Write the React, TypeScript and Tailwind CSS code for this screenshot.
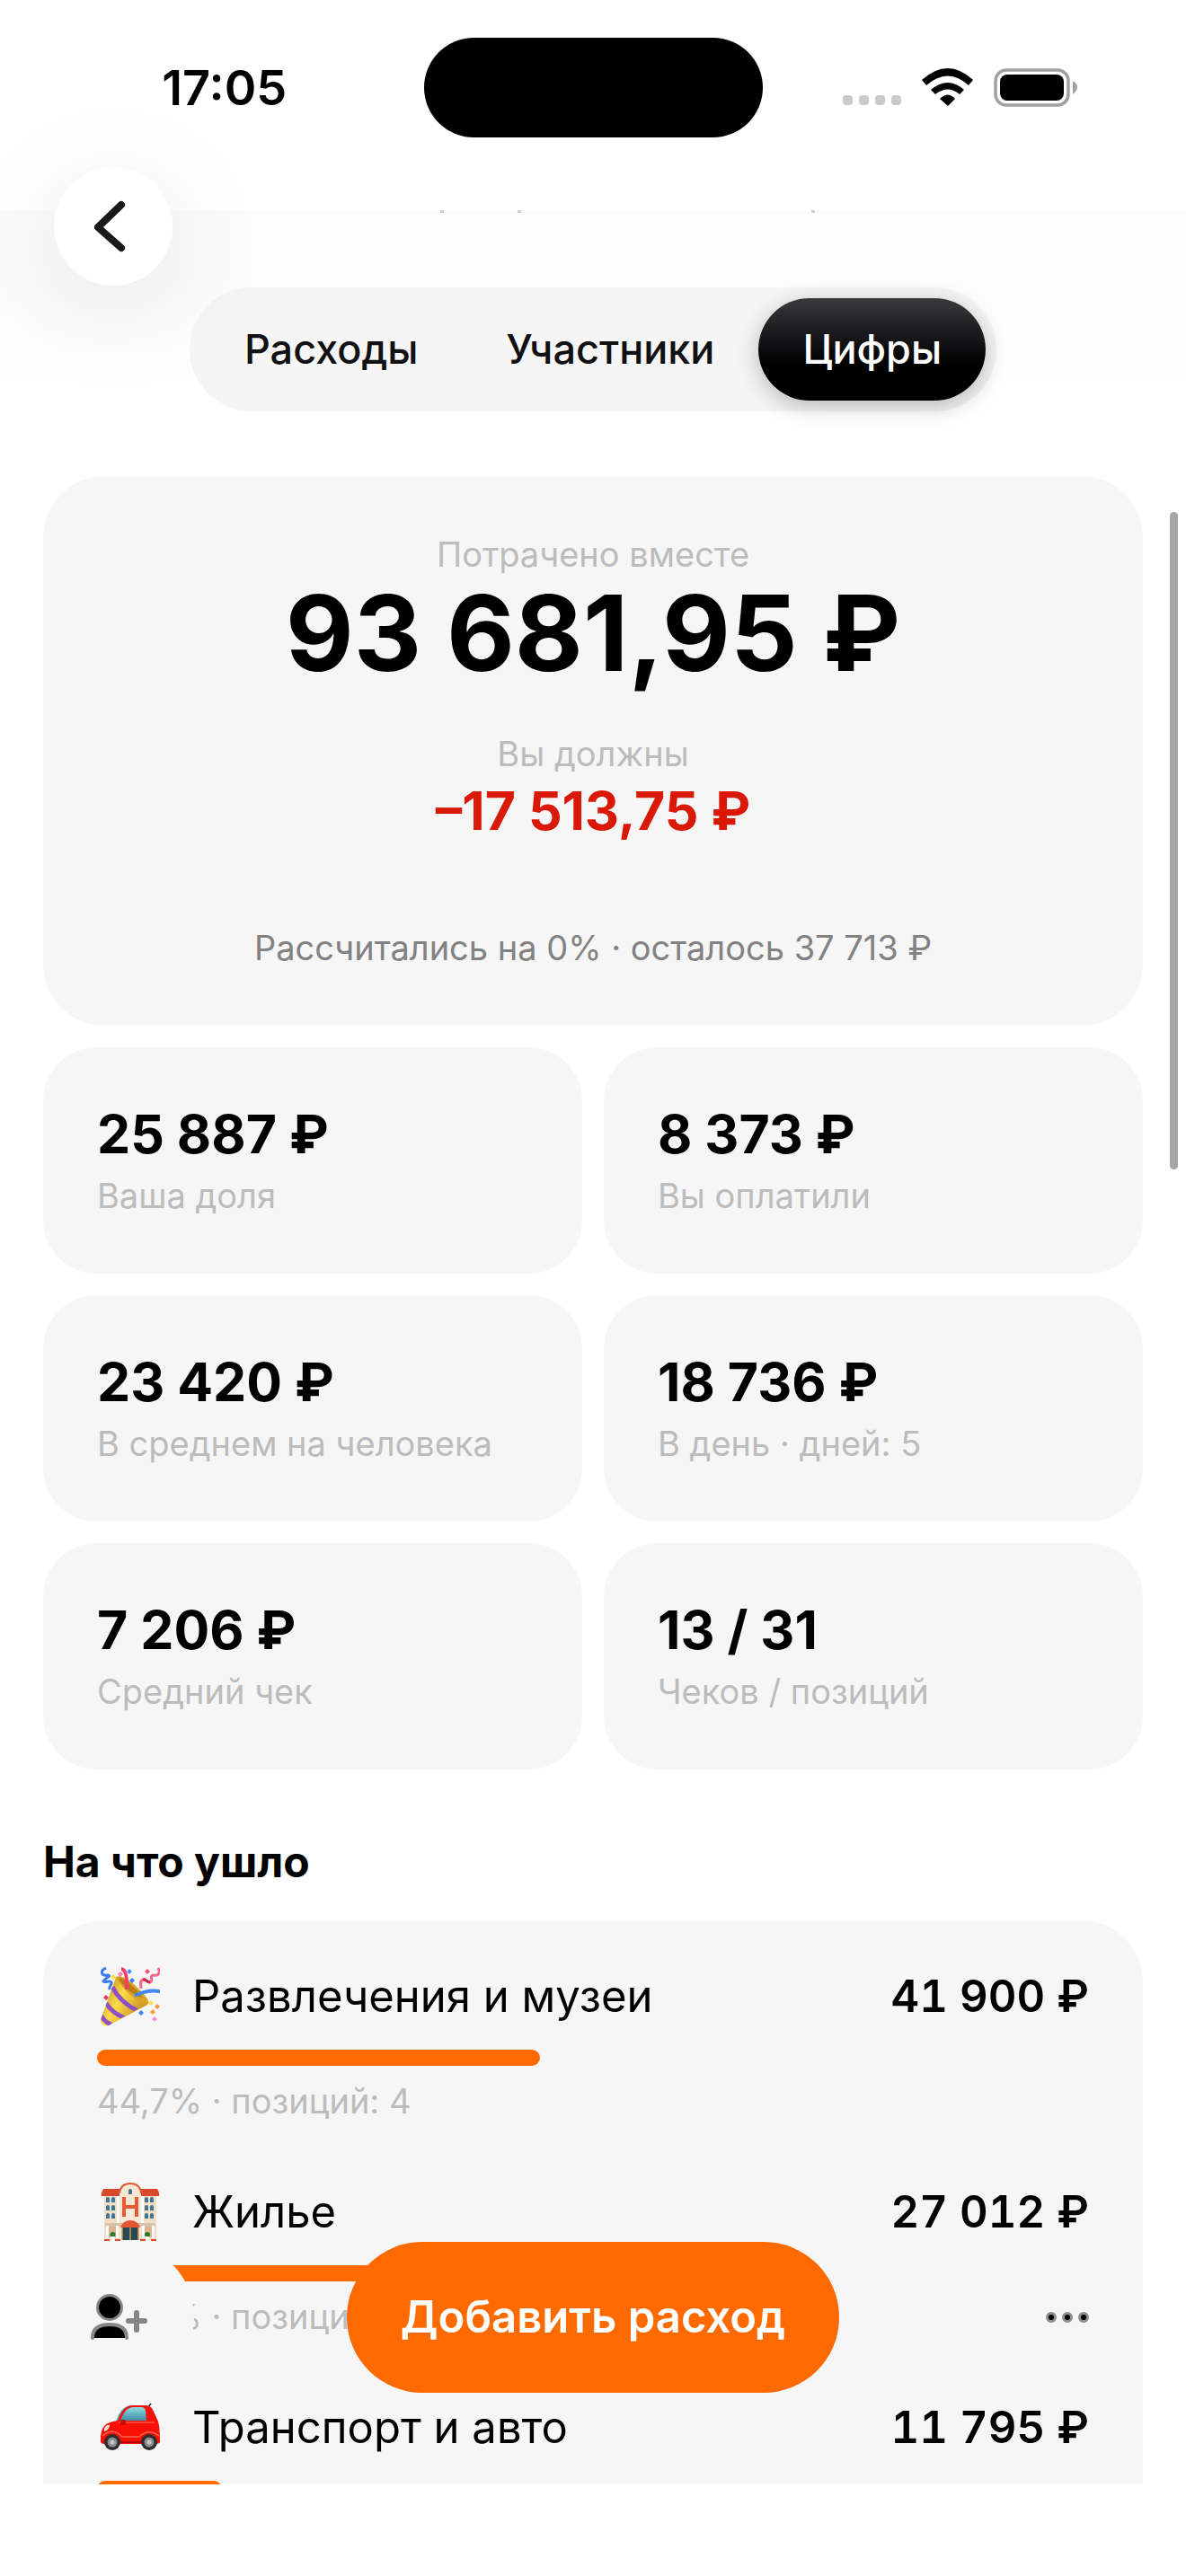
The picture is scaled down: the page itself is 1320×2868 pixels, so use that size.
import React, { useState } from "react";
import clsx from "clsx";

interface Stat {
  value: string;
  label: string;
}

interface Category {
  title: string;
  amount: string;
  percent: number;
  caption?: string;
  Icon: () => React.ReactElement;
}

const TABS = ["Расходы", "Участники", "Цифры"];

const STATS: Stat[] = [
  { value: "25 887 ₽", label: "Ваша доля" },
  { value: "8 373 ₽", label: "Вы оплатили" },
  { value: "23 420 ₽", label: "В среднем на человека" },
  { value: "18 736 ₽", label: "В день · дней: 5" },
  { value: "7 206 ₽", label: "Средний чек" },
  { value: "13 / 31", label: "Чеков / позиций" },
];

const CATEGORIES: Category[] = [
  { title: "Развлечения и музеи", amount: "41 900 ₽", percent: 44.7, caption: "44,7% · позиций: 4", Icon: PartyIcon },
  { title: "Жилье", amount: "27 012 ₽", percent: 28.8, caption: "28,8% · позиций: 2", Icon: HotelIcon },
  { title: "Транспорт и авто", amount: "11 795 ₽", percent: 12.6, Icon: CarIcon },
];

function PartyIcon() {
  return (
    <svg viewBox="0 0 66 66" className="size-[66px]" aria-hidden="true">
      <defs>
        <linearGradient id="cone" x1="0" y1="0.3" x2="0.8" y2="0.8">
          <stop offset="0" stopColor="#c9961c" />
          <stop offset="0.45" stopColor="#fbdc4b" />
          <stop offset="1" stopColor="#cf9420" />
        </linearGradient>
        <clipPath id="cone-clip">
          <path d="M17 11C21 18 38 38 53 40L9 65Q1 67 0 59Z" />
        </clipPath>
      </defs>
      <path d="M17 11C22 8 32 14 41 23C50 32 56 38 52 42C43 45 17 20 17 11Z" fill="#d9a325" />
      <path d="M20 12C28 13 38 23 47 34C38 32 25 24 20 12Z" fill="#b97c12" />
      <path d="M17 11C21 21 38 38 52 42L9 65Q1 67 0 59Z" fill="url(#cone)" />
      <g clipPath="url(#cone-clip)" fill="none" stroke="#9250c6" strokeWidth="5">
        <path d="M13 22Q22 40 42 49" />
        <path d="M6 40Q13 52 28 57" />
        <path d="M0 53Q4 61 12 64" />
      </g>
      <path d="M23 2Q30 3 29 25" fill="none" stroke="#f33e69" strokeWidth="4" />
      <path d="M38 32Q51 25 66 27" fill="none" stroke="#3f87ee" strokeWidth="4" />
      <path d="M6 1C-1 4 0 10 8 9C13 10 5 12 3 16C5 18 11 14 12 17C13 20 9 20 10 25" fill="none" stroke="#3b7df0" strokeWidth="3" />
      <path d="M64 1C67 7 64 10 59 9C53 10 60 15 55 17C51 17 51 13 47 14C43 16 45 19 45 24" fill="none" stroke="#f2688f" strokeWidth="3" />
      <path d="M55 17C51 17 51 13 47 14" fill="none" stroke="#c92a4a" strokeWidth="3" />
      <g>
        <path d="M32 2l3 3-3 3-3-3z" fill="#4b91f5" />
        <path d="M35 12l3 3-3 3-3-3z" fill="#3c7ff0" />
        <path d="M52 2l3 3-3 3-3-3z" fill="#f14f78" />
        <path d="M22 5l3 3-3 3-3-3z" fill="#f87fae" />
        <path d="M14 8l3 3-3 3-3-3z" fill="#fbdc4b" />
        <path d="M6 31l3 3-3 3-3-3z" fill="#e8365c" />
        <path d="M56 37l3 3-3 3-3-3z" fill="#fbe052" />
        <path d="M63 41l3 3-3 3-3-3z" fill="#f79648" />
        <path d="M58 47l3 3-3 3-3-3z" fill="#f5a030" />
        <path d="M45 48l3 3-3 3-3-3z" fill="#3c7ff0" />
        <path d="M60 55l3 3-3 3-3-3z" fill="#f191cf" />
      </g>
    </svg>
  );
}

function HotelIcon() {
  const windows = [7, 13, 50, 56];
  return (
    <svg viewBox="0 0 66 66" className="size-[66px]" aria-hidden="true">
      <path d="M4 14H62V64H4Z" fill="#f1dcc4" />
      <path d="M3 7H22V15H1Q0 12 3 7ZM44 7H63Q66 12 65 15H44Z" fill="#d9492a" />
      <path d="M21 64V12Q22 2 33 2T45 12V64Z" fill="#f8e8d3" />
      <path d="M21 12Q22 1 33 1T45 12" fill="none" stroke="#df5a39" strokeWidth="2" />
      <path d="M18 15h3v32h-3zM45 15h3v32h-3z" fill="#fff" />
      {windows.map((x) =>
        [16, 25, 34].map((y) => (
          <path key={`${x}-${y}`} d={`M${x - 1} ${y + 6}v-4q0-2 2-2t2 2v4z`} fill="#3e7795" />
        ))
      )}
      <path d="M31 13v-4q0-2 2-2t2 2v4z" fill="#3e7795" />
      <path d="M24 16h4v9h10v-9h4v22h-4v-9H28v9h-4z" fill="#e45a34" />
      <path d="M5 45H61V49H5Z" fill="#d8c3ad" />
      <path d="M7 49h12v12H7zM47 49h12v12H47z" fill="#dfb491" />
      <path d="M6 48h3v14H6zM17 48h3v14h-3zM46 48h3v14h-3zM57 48h3v14h-3z" fill="#fff" />
      <path d="M24 49H42V64H24Z" fill="#294755" />
      <path d="M24 49v15M33 49v15M42 49v15" stroke="#c99c55" strokeWidth="1.5" />
      <path d="M22 50Q25 42 33 42T44 50Z" fill="#e45533" />
      <circle cx="13.500" cy="58" r="3" fill="#2a7d2c" />
      <circle cx="52" cy="58" r="3" fill="#2a7d2c" />
      <path d="M11 60h5l-1 5h-3zM49 60h5l-1 5h-3z" fill="#fff" />
      <path d="M4 63h6v2H4zM16 63h6v2h-6zM44 63h6v2h-6zM56 63h6v2h-6z" fill="#d9492a" />
    </svg>
  );
}

function CarIcon() {
  return (
    <svg viewBox="0 0 66 66" className="size-[66px]" aria-hidden="true">
      <defs>
        <linearGradient id="glass" x1="0" y1="0" x2="0" y2="1">
          <stop offset="0" stopColor="#8ddbe6" />
          <stop offset="1" stopColor="#3f8ca3" />
        </linearGradient>
      </defs>
      <path d="M53 10L56 6" stroke="#333" strokeWidth="1.500" />
      <path d="M17 27Q22 8 35 8H52Q60 11 63 27Z" fill="#57aac2" />
      <path d="M0 49Q-1 35 6 29Q11 26 19 25Q25 8 36 8H50Q57 9 58 13L64 26Q66 32 66 49Q65 51 60 51H4Q1 51 0 49Z" fill="#f80f06" />
      <path d="M22 25Q27 10 37 10H46Q49 10 50 14L51 25Z" fill="url(#glass)" />
      <path d="M20 27H60" stroke="#ff7a62" strokeWidth="1" />
      <path d="M4 34Q6 29 10 30Q9 36 4 37Z" fill="#ffe3d8" />
      <rect x="22" y="24" width="6" height="6" rx="2" fill="#c90a05" />
      <path d="M2 42Q14 32 24 43H43Q53 33 65 42" fill="none" stroke="#ff6a4d" strokeWidth="1.500" />
      <path d="M22 49H45" stroke="#b30b06" strokeWidth="2" />
      {[13, 54].map((cx) => (
        <g key={cx}>
          <circle cx={cx} cy="49" r="9" fill="#2c2c2e" />
          <circle cx={cx} cy="49" r="5.500" fill="#8c8c8e" />
          <circle cx={cx} cy="49" r="2.500" fill="#c6c6c8" />
        </g>
      ))}
    </svg>
  );
}

function StatusBar() {
  return (
    <div className="grid h-[195px] grid-cols-[1fr_377px_1fr] items-center">
      <time className="pl-7 text-center text-[54px] leading-[60px] font-semibold">17:05</time>
      <div className="h-[111px] rounded-full bg-black" />
      <div className="flex items-center justify-center pr-8">
        <svg viewBox="0 0 261 44" className="h-[44px] w-[261px]" aria-hidden="true">
          {[0, 18, 36, 54].map((x) => (
            <rect key={x} x={x} y="30" width="11" height="11" rx="4" fill="#cacaca" />
          ))}
          <path d="M88 13Q117-13 145 13L140 19Q117-2 93 19Z" />
          <path d="M98 24Q117 8 135 24L130 29Q117 18 103 29Z" />
          <path d="M108 34Q117 25 125 34L117 42Z" />
          <rect x="170" y="2" width="81" height="39" rx="12" fill="none" stroke="#a0a0a0" strokeWidth="3.500" />
          <rect x="175" y="7" width="71" height="29" rx="8" />
          <path d="M256 14Q261 17 261 21T256 29Z" fill="#a0a0a0" />
        </svg>
      </div>
    </div>
  );
}

function Tabs() {
  const [active, setActive] = useState("Цифры");

  return (
    <div role="tablist" className="mx-auto flex w-fit rounded-full bg-[#f5f5f5] p-3">
      {TABS.map((tab) => (
        <button
          key={tab}
          role="tab"
          aria-selected={tab === active}
          onClick={() => setActive(tab)}
          className={clsx(
            "h-[114px] rounded-full px-[49px] text-[45px] leading-[60px] font-medium",
            tab === active
              ? "bg-linear-to-b from-[#3a393b] via-[#121114] via-45% to-black to-80% text-white shadow-[0_6px_24px_rgba(0,0,0,0.25)]"
              : "text-[#111012]"
          )}
        >
          {tab}
        </button>
      ))}
    </div>
  );
}

function Summary() {
  return (
    <section className="flex flex-col items-center rounded-[68px] bg-[#f6f6f6] py-[63px] text-center">
      <p className="text-[38px] leading-12 text-[#bcbcbc]">Потрачено вместе</p>
      <p className="text-[117px] leading-32 font-bold">93 681,95 ₽</p>
      <p className="mt-[46px] text-[38px] leading-12 text-[#bcbcbc]">Вы должны</p>
      <p className="mt-1 text-[59px] leading-18 font-bold text-[#d91806]">–17 513,75 ₽</p>
      <p className="mt-[92px] text-[38px] leading-12 text-[#828282]">
        Рассчитались на 0% · осталось 37 713 ₽
      </p>
    </section>
  );
}

function StatTile({ value, label }: Stat) {
  return (
    <div className="rounded-[60px] bg-[#f6f6f6] px-15 pt-[61px] pb-[63px]">
      <p className="text-[59px] leading-18 font-bold">{value}</p>
      <p className="mt-2 text-[38px] leading-12 text-[#bcbcbc]">{label}</p>
    </div>
  );
}

function CategoryRow({ title, amount, percent, caption, Icon }: Category) {
  return (
    <li>
      <div className="flex h-[74px] items-center">
        <span className="ml-1">
          <Icon />
        </span>
        <span className="ml-9 flex-1 text-[49px] leading-[60px]">{title}</span>
        <span className="text-[49px] leading-[60px] font-semibold tabular-nums">{amount}</span>
      </div>
      <div className="mt-[22px] h-[18px] rounded-full bg-[#ff6a00]" style={{ width: `${percent}%` }} />
      {caption && <p className="mt-[15px] text-[38px] leading-12 text-[#bcbcbc]">{caption}</p>}
    </li>
  );
}

// Floating actions over the scrolling content
function Toolbar() {
  return (
    <div className="absolute inset-x-12 bottom-[204px] flex items-center justify-between">
      <button aria-label="Добавить участника" className="flex size-42 items-center justify-center rounded-full bg-[#f6f6f6]">
        <svg viewBox="0 0 66 56" className="h-[56px] w-[66px]" aria-hidden="true">
          <circle cx="23" cy="17" r="13.500" fill="#000" stroke="#868688" strokeWidth="3" />
          <path d="M4 51Q4 36 23 36T42 51Z" fill="#000" />
          <path d="M4 51Q4 36 23 36T42 51" fill="none" stroke="#868688" strokeWidth="4" strokeLinecap="round" />
          <path d="M53 23V42M44 32H62" fill="none" stroke="#868688" strokeWidth="6" strokeLinecap="round" />
        </svg>
      </button>
      <button className="h-42 rounded-full bg-[#ff6a00] px-15 text-[49px] leading-[60px] font-semibold text-white">
        Добавить расход
      </button>
      <button aria-label="Ещё" className="flex size-42 items-center justify-center rounded-full bg-[#f6f6f6]">
        <svg viewBox="0 0 48 12" className="h-3 w-12" aria-hidden="true">
          {[6, 24, 42].map((cx) => (
            <circle key={cx} cx={cx} cy="6" r="4.500" fill="#000" stroke="#8e8e90" strokeWidth="3" />
          ))}
        </svg>
      </button>
    </div>
  );
}

export default function App() {
  return (
    <div className="relative flex h-screen flex-col overflow-hidden bg-white font-['Inter','Liberation_Sans',sans-serif] text-black">
      <header className="h-[234px] shrink-0">
        <StatusBar />
      </header>

      <main className="relative min-h-0 flex-1 overflow-hidden px-12">
        <div className="-mx-12 h-[86px] bg-[#fcfcfc]">
          {/* Trailing edge of the scrolled-away subtitle */}
          <div className="flex justify-center pl-[77px]" aria-hidden="true">
            <span className="h-[3px] w-1 bg-[#cfcfcf]" />
            <span className="ml-[82px] h-[3px] w-1 bg-[#cfcfcf]" />
            <span className="ml-[323px] h-[3px] w-1 bg-[#cfcfcf]" />
          </div>
        </div>
        <div className="-mx-12 mb-6 bg-linear-to-b from-[#fcfcfc] to-white to-60% pb-12">
          <Tabs />
        </div>

        <Summary />

        <section className="mt-6 grid grid-cols-2 gap-6">
          {STATS.map((stat) => (
            <StatTile key={stat.label} {...stat} />
          ))}
        </section>

        <h2 className="mt-[73px] mb-[35px] text-[48px] leading-[60px] font-bold">На что ушло</h2>

        <ul className="flex flex-col gap-[63px] rounded-[68px] bg-[#f6f6f6] px-15 pt-12 pb-30">
          {CATEGORIES.map((category) => (
            <CategoryRow key={category.title} {...category} />
          ))}
        </ul>

        <div className="absolute top-[336px] right-[9px] h-[732px] w-[9px] rounded-full bg-[#a6a6a6]" />
      </main>

      <footer className="h-[102px] shrink-0 bg-white" />

      <button
        aria-label="Назад"
        className="absolute top-[186px] left-[60px] flex size-33 items-center justify-center rounded-full bg-white shadow-[0_24px_120px_rgba(0,0,0,0.1)]"
      >
        <svg viewBox="0 0 42 60" className="mr-2 h-[60px] w-[42px]" aria-hidden="true">
          <path d="M34 6L8 31L34 54" fill="none" stroke="#1a191b" strokeWidth="8" strokeLinecap="round" strokeLinejoin="round" />
        </svg>
      </button>

      <Toolbar />
    </div>
  );
}
